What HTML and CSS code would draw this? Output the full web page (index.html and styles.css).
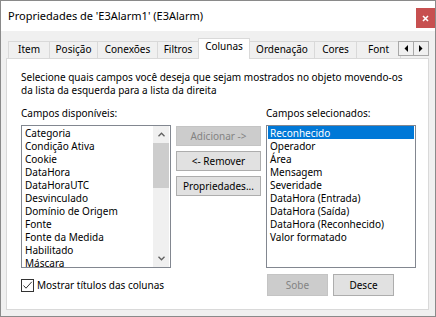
FILE: index.html
```html
<!DOCTYPE html>
<html lang="pt">
<head>
<meta charset="utf-8">
<title>Propriedades de 'E3Alarm1' (E3Alarm)</title>
<link rel="stylesheet" href="styles.css">
</head>
<body>
<div class="window">
  <div class="titlebar">
    <span class="title">Propriedades de 'E3Alarm1' (E3Alarm)</span>
    <div class="close">
      <svg width="7" height="7" viewBox="0 0 7 7"><path d="M1 1 L6 6 M6 1 L1 6" stroke="#fff" stroke-width="1.6" fill="none"/></svg>
    </div>
  </div>
  <div class="tabstrip">
    <div class="tab w-item">Item</div>
    <div class="tab w-pos">Posição</div>
    <div class="tab w-con">Conexões</div>
    <div class="tab w-fil">Filtros</div>
    <div class="tab selected w-col">Colunas</div>
    <div class="tab w-ord">Ordenação</div>
    <div class="tab w-cor">Cores</div>
    <div class="tab w-font">Font</div>
    <div class="scroller">
      <div class="sbtn"><svg width="4" height="7" viewBox="0 0 4 7"><polygon points="4,0 4,7 0.5,3.5" fill="#000"/></svg></div>
      <div class="sbtn"><svg width="4" height="7" viewBox="0 0 4 7"><polygon points="0,0 0,7 3.5,3.5" fill="#000"/></svg></div>
    </div>
  </div>
  <div class="panel">
    <p class="desc"><span class="line">Selecione quais campos você deseja que sejam mostrados no objeto movendo-os</span><span class="line">da lista da esquerda para a lista da direita</span></p>
    <div class="grid">
      <div class="lbl">Campos disponíveis:</div>
      <div></div>
      <div class="lbl">Campos selecionados:</div>

      <div class="listbox with-scroll">
        <div class="items">
          <div class="item">Categoria</div>
          <div class="item">Condição Ativa</div>
          <div class="item">Cookie</div>
          <div class="item">DataHora</div>
          <div class="item">DataHoraUTC</div>
          <div class="item">Desvinculado</div>
          <div class="item">Domínio de Origem</div>
          <div class="item">Fonte</div>
          <div class="item">Fonte da Medida</div>
          <div class="item">Habilitado</div>
          <div class="item">Máscara</div>
        </div>
        <div class="vscroll">
          <div class="arrow"><svg width="7" height="5" viewBox="0 0 7 5"><polyline points="0.5,4.2 3.5,1.2 6.5,4.2" fill="none" stroke="#606060" stroke-width="1.3"/></svg></div>
          <div class="thumb"></div>
          <div class="track"></div>
          <div class="arrow"><svg width="7" height="5" viewBox="0 0 7 5"><polyline points="0.5,0.8 3.5,3.8 6.5,0.8" fill="none" stroke="#606060" stroke-width="1.3"/></svg></div>
        </div>
      </div>

      <div class="mid">
        <button class="btn disabled">Adicionar -&gt;</button>
        <button class="btn">&lt;- Remover</button>
        <button class="btn">Propriedades...</button>
      </div>

      <div class="listbox">
        <div class="items">
          <div class="item sel">Reconhecido</div>
          <div class="item">Operador</div>
          <div class="item">Área</div>
          <div class="item">Mensagem</div>
          <div class="item">Severidade</div>
          <div class="item">DataHora (Entrada)</div>
          <div class="item">DataHora (Saída)</div>
          <div class="item">DataHora (Reconhecido)</div>
          <div class="item">Valor formatado</div>
        </div>
      </div>

      <div class="chkrow">
        <span class="chk"><svg width="11" height="11" viewBox="0 0 11 11"><polyline points="1.5,5.5 4,8.2 9.8,1.8" fill="none" stroke="#333" stroke-width="1"/></svg></span>
        <span class="chklabel">Mostrar títulos das colunas</span>
      </div>
      <div></div>
      <div class="updown">
        <button class="btn small disabled">Sobe</button>
        <button class="btn small">Desce</button>
      </div>
    </div>
  </div>
</div>
</body>
</html>
```

FILE: styles.css
```css
html, body {
  margin: 0;
  padding: 0;
  background: #ffffff;
}

body {
  font-family: "Noto Sans", "Liberation Sans", sans-serif;
  font-size: 10px;
  color: #000;
}

.window {
  width: 436px;
  height: 317px;
  box-sizing: border-box;
  border: 1px solid #8a8a8a;
  background: #f0f0f0;
  display: flex;
  flex-direction: column;
  overflow: hidden;
}

.titlebar {
  height: 30px;
  flex: none;
  background: #ffffff;
  display: flex;
  justify-content: space-between;
  align-items: flex-start;
}

.title {
  font-size: 11px;
  line-height: 15px;
  margin-top: 7px;
  padding-left: 7px;
}

.close {
  width: 19px;
  height: 20px;
  margin-top: 7px;
  background: #c75050;
  display: flex;
  align-items: center;
  justify-content: center;
}

.tabstrip {
  position: relative;
  height: 21px;
  flex: none;
  margin-top: 7px;
  padding-left: 7px;
  display: flex;
  align-items: flex-start;
}

.tab {
  box-sizing: border-box;
  height: 17px;
  margin-top: 3px;
  margin-right: -1px;
  border: 1px solid #d9d9d9;
  border-bottom: none;
  background: #f0f0f0;
  line-height: 15px;
  text-align: center;
  white-space: nowrap;
}

.tab.selected {
  position: relative;
  z-index: 2;
  height: 21px;
  margin-top: 0;
  background: #ffffff;
}

.w-item { width: 42px; }
.w-pos { width: 49px; }
.w-con { width: 61px; }
.w-fil { width: 42px; }
.w-col { width: 52px; }
.w-ord { width: 66px; }
.w-cor { width: 43px; }
.w-font { width: 45px; }

.scroller {
  position: absolute;
  z-index: 3;
  top: 3px;
  right: 6px;
  display: flex;
}

.sbtn {
  box-sizing: border-box;
  width: 16px;
  height: 15px;
  margin-left: -1px;
  border: 1px solid #a8a8a8;
  background: #f0f0f0;
  display: flex;
  align-items: center;
  justify-content: center;
}

.panel {
  position: relative;
  z-index: 1;
  box-sizing: border-box;
  height: 252px;
  margin: -1px 6px 0 5px;
  border: 1px solid #d9d9d9;
  background: #ffffff;
  padding: 12px 0 0 14px;
}

.desc {
  margin: 0 0 10px;
  line-height: 13px;
}

.desc .line {
  display: block;
  white-space: nowrap;
}

.grid {
  display: grid;
  grid-template-columns: 150px 85px 150px;
  column-gap: 5px;
}

.lbl {
  line-height: 13px;
  height: 13px;
  margin-bottom: 5px;
}

.listbox {
  box-sizing: border-box;
  height: 143px;
  border: 1px solid #828790;
  background: #ffffff;
  overflow: hidden;
  display: flex;
}

.items {
  flex: 1;
  min-width: 0;
}

.item {
  height: 13px;
  box-sizing: border-box;
  padding: 1px 0 0 2px;
  margin: 0 1px;
  line-height: 12px;
  white-space: nowrap;
}

.item.sel {
  background: #0078d7;
  color: #ffffff;
}

.vscroll {
  width: 16px;
  margin: 0 1px 0 0;
  background: #f0f0f0;
  display: flex;
  flex-direction: column;
}

.arrow {
  height: 17px;
  flex: none;
  display: flex;
  align-items: center;
  justify-content: center;
}

.thumb {
  height: 45px;
  flex: none;
  background: #cdcdcd;
}

.track {
  flex: 1;
}

.mid {
  padding-top: 1px;
  display: flex;
  flex-direction: column;
}

.btn {
  box-sizing: border-box;
  height: 20px;
  margin: 0 0 5px 0;
  padding: 0;
  border: 1px solid #adadad;
  background: #e1e1e1;
  color: #000;
  font-family: inherit;
  font-size: 10px;
  line-height: 13px;
  text-align: center;
  white-space: nowrap;
}

.btn.disabled {
  background: #cccccc;
  border-color: #c4c4c4;
  color: #838383;
}

.chkrow {
  margin-top: 11px;
  display: flex;
  align-items: center;
  height: 13px;
}

.chk {
  box-sizing: border-box;
  width: 13px;
  height: 13px;
  border: 1px solid #333333;
  background: #ffffff;
  display: flex;
  align-items: center;
  justify-content: center;
  margin-right: 3px;
}

.chklabel {
  line-height: 13px;
  white-space: nowrap;
}

.updown {
  margin-top: 6px;
  padding-left: 1px;
  display: flex;
  gap: 5px;
}

.btn.small {
  width: 61px;
  height: 22px;
  margin: 0;
}
```
